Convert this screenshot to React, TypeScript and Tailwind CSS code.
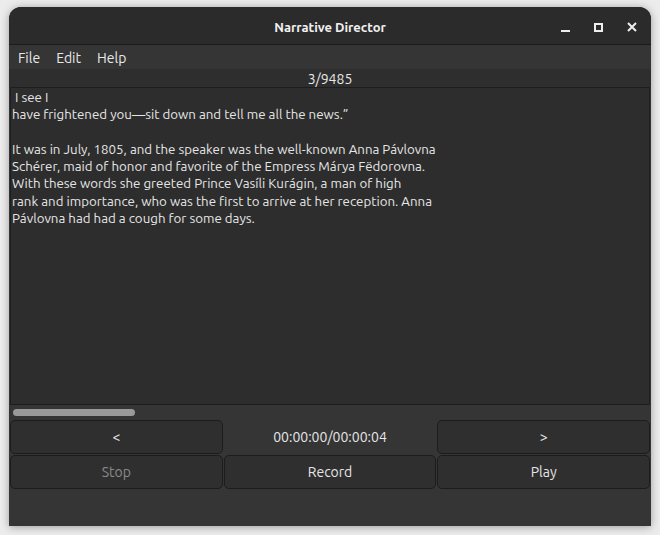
const font = "font-['Ubuntu','Noto_Sans','Open_Sans',sans-serif]";

function TitleBar() {
  return (
    <div className="relative h-[38px] flex items-center justify-center pt-[4px] bg-[#2b2b2b] border-b border-[#1b1b1b] rounded-t-[12px]">
      <span className="text-[13px] font-bold text-[#f0f0f0]">Narrative Director</span>
      <div className="absolute right-0 top-0 h-full flex items-center pt-[3px]">
        <button className="w-[33px] h-full flex items-center justify-center">
          <span className="block w-[9px] h-[2px] bg-[#eeeeee] mt-[8px]" />
        </button>
        <button className="w-[33px] h-full flex items-center justify-center">
          <span className="block w-[9px] h-[9px] border-2 border-[#eeeeee]" />
        </button>
        <button className="w-[36px] h-full flex items-center justify-center pr-[3px]">
          <svg width="10" height="10" viewBox="0 0 10 10">
            <path d="M1 1 L9 9 M9 1 L1 9" stroke="#eeeeee" strokeWidth="2" />
          </svg>
        </button>
      </div>
    </div>
  );
}

function Btn({ label, disabled }: { label: string; disabled?: boolean }) {
  return (
    <button
      className={
        "h-[34px] rounded-[5px] border border-[#1c1c1c] bg-[#2f2f2f] text-[14px] " +
        (disabled ? "text-[#8a8a8a]" : "text-[#e6e6e6]")
      }
    >
      {label}
    </button>
  );
}

const lines = [
  " I see I",
  "have frightened you\u2014sit down and tell me all the news.\u201d",
  "",
  "It was in July, 1805, and the speaker was the well-known Anna Pávlovna",
  "Schérer, maid of honor and favorite of the Empress Márya Fëdorovna.",
  "With these words she greeted Prince Vasíli Kurágin, a man of high",
  "rank and importance, who was the first to arrive at her reception. Anna",
  "Pávlovna had had a cough for some days.",
];

export default function App() {
  return (
    <div className={"w-[660px] h-[535px] bg-[#ececec] pt-[7px] pl-[9px] " + font}>
      <div className="w-[642px] h-[519px] flex flex-col bg-[#353535] rounded-t-[12px] shadow-[0_1px_8px_rgba(0,0,0,0.35)]">
        <TitleBar />
        <div className="h-[24px] flex items-center gap-[16px] px-[9px] pt-[3px] bg-[#353535] text-[14px] text-[#e8e8e8]">
          <span>File</span>
          <span>Edit</span>
          <span>Help</span>
        </div>
        <div className="h-[18px] flex items-center justify-center pt-[1px] bg-[#2e2e2e] text-[14px] text-[#e8e8e8] leading-none">
          3/9485
        </div>
        <div className="h-[318px] mx-px border border-[#1e1e1e] bg-[#2d2d2d] px-[1px] pt-[1px] text-[13.3px] leading-[17.3px] text-[#e6e6e6] whitespace-pre overflow-hidden">
          {lines.map((l, i) => (
            <div key={i} className="h-[17.3px]">{l}</div>
          ))}
        </div>
        <div className="h-[15px] px-[4px] flex items-center">
          <div className="w-[122px] h-[7px] rounded-full bg-[#9a9a9a]" />
        </div>
        <div className="grid grid-cols-3 gap-x-[1px] gap-y-px px-px">
          <Btn label="<" />
          <div className="h-[34px] flex items-center justify-center text-[14px] text-[#e6e6e6]">
            00:00:00/00:00:04
          </div>
          <Btn label=">" />
          <Btn label="Stop" disabled />
          <Btn label="Record" />
          <Btn label="Play" />
        </div>
      </div>
    </div>
  );
}
